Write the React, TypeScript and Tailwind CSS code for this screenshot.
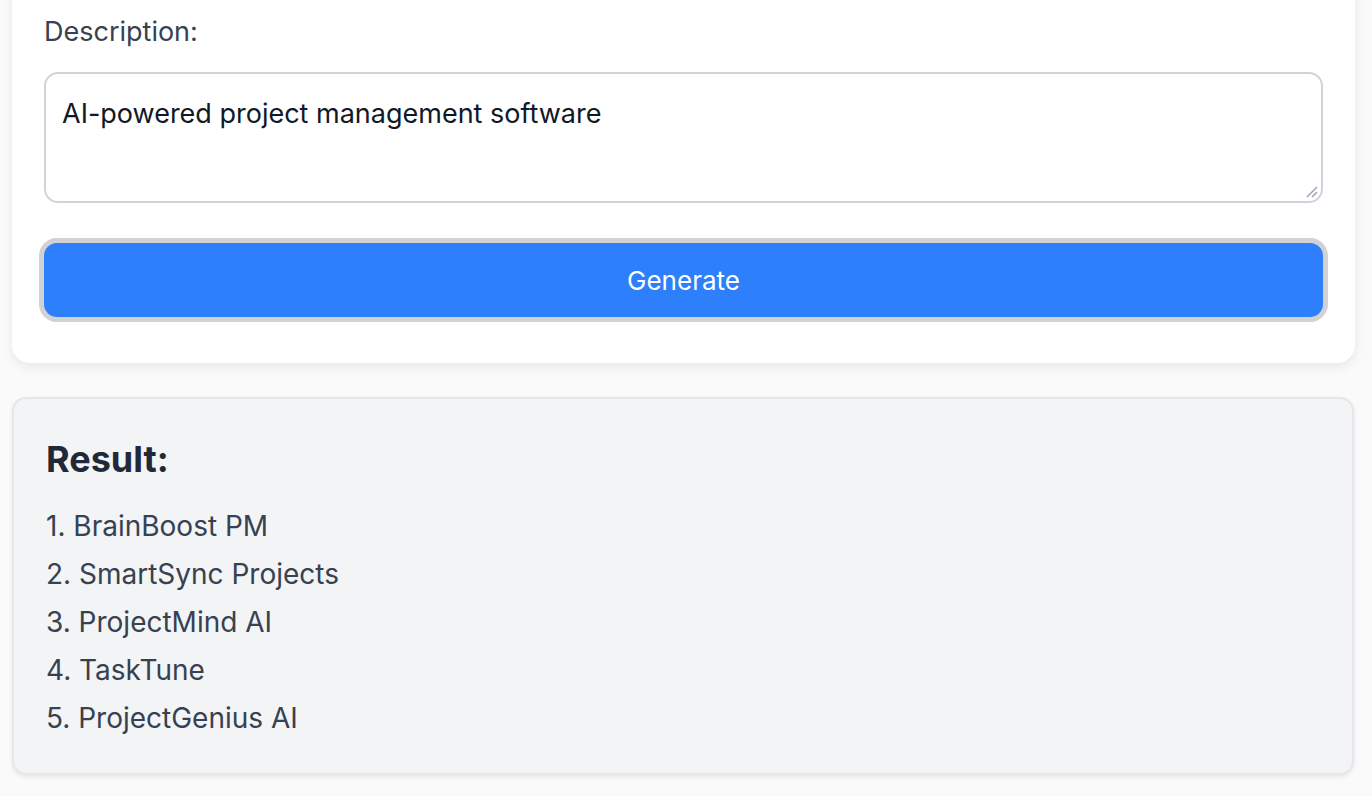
export default function App() {
  return (
    <div className="w-[1372px] h-[796px] overflow-hidden bg-[#fafafa] relative" style={{ fontFamily: "Inter, 'Noto Sans', sans-serif" }}>
      <div className="absolute left-[12px] top-[-40px] w-[1343px] h-[403px] bg-white rounded-[18px] shadow-[0_4px_12px_rgba(0,0,0,0.08)] px-[32px] pt-[50px]">
        <div className="text-[27px] text-[#374151] leading-[44px]">Description:</div>
        <div className="mt-[18px] h-[131px] border-2 border-[#d1d5db] rounded-[14px] px-[16px] pt-[20px] text-[27px] text-[#111827] relative">
          AI-powered project management software
          <svg className="absolute right-[3px] bottom-[3px]" width="14" height="14" viewBox="0 0 14 14"><path d="M13 3 L3 13 M13 8 L8 13" stroke="#9ca3af" strokeWidth="1.5" /></svg>
        </div>
        <div className="mt-[35px] mx-[-5px] h-[84px] rounded-[18px] bg-[#d1d1d6] p-[5px]">
          <div className="h-full rounded-[13px] bg-[#2d7ffb] flex items-center justify-center text-white text-[26px]">Generate</div>
        </div>
      </div>
      <div className="absolute left-[12px] top-[397px] w-[1342px] h-[378px] bg-[#f3f4f6] border-2 border-[#e5e7eb] rounded-[14px] shadow-[0_2px_4px_rgba(0,0,0,0.08)] px-[32px] pt-[34px]">
        <div className="text-[36px] font-bold text-[#1f2937] leading-[52px]">Result:</div>
        <div className="mt-[17px] text-[28px] text-[#374151] leading-[48px]">
          <div>1. BrainBoost PM</div>
          <div>2. SmartSync Projects</div>
          <div>3. ProjectMind AI</div>
          <div>4. TaskTune</div>
          <div>5. ProjectGenius AI</div>
        </div>
      </div>
    </div>
  );
}
